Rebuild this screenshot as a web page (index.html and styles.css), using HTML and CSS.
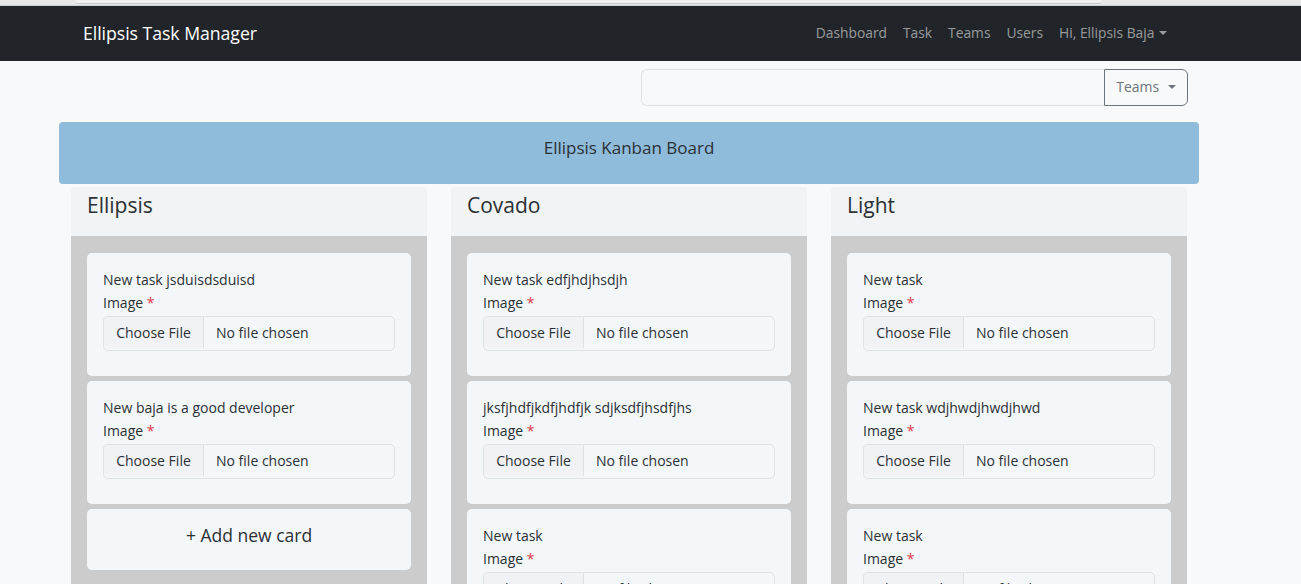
FILE: index.html
```html
<!DOCTYPE html>
<html>
<head>
<meta charset="utf-8">
<link rel="stylesheet" href="styles.css">
</head>
<body>
<div class="topstrip"><div class="topbar"></div></div>
<nav class="navbar">
  <a class="brand">Ellipsis Task Manager</a>
  <ul class="navlinks">
    <li>Dashboard</li>
    <li>Task</li>
    <li>Teams</li>
    <li>Users</li>
    <li class="dropdown">Hi, Ellipsis Baja <span class="caret"></span></li>
  </ul>
</nav>
<main class="page">
  <div class="searchrow">
    <div class="inputgroup">
      <input class="searchinput" type="text">
      <button class="teamsbtn">Teams <span class="caret dark"></span></button>
    </div>
  </div>
  <div class="banner">Ellipsis Kanban Board</div>
  <div class="board">
    <section class="column">
      <header class="colhead">Ellipsis</header>
      <div class="colbody">
        <div class="card">
          <div class="title">New task jsduisdsduisd</div>
          <div class="label">Image <span class="req">*</span></div>
          <div class="file"><span class="filebtn">Choose File</span><span class="filename">No file chosen</span></div>
        </div>
        <div class="card">
          <div class="title">New baja is a good developer</div>
          <div class="label">Image <span class="req">*</span></div>
          <div class="file"><span class="filebtn">Choose File</span><span class="filename">No file chosen</span></div>
        </div>
        <div class="card addcard">+ Add new card</div>
      </div>
    </section>
    <section class="column">
      <header class="colhead">Covado</header>
      <div class="colbody">
        <div class="card">
          <div class="title">New task edfjhdjhsdjh</div>
          <div class="label">Image <span class="req">*</span></div>
          <div class="file"><span class="filebtn">Choose File</span><span class="filename">No file chosen</span></div>
        </div>
        <div class="card">
          <div class="title">jksfjhdfjkdfjhdfjk sdjksdfjhsdfjhs</div>
          <div class="label">Image <span class="req">*</span></div>
          <div class="file"><span class="filebtn">Choose File</span><span class="filename">No file chosen</span></div>
        </div>
        <div class="card">
          <div class="title">New task</div>
          <div class="label">Image <span class="req">*</span></div>
          <div class="file"><span class="filebtn">Choose File</span><span class="filename">No file chosen</span></div>
        </div>
      </div>
    </section>
    <section class="column">
      <header class="colhead">Light</header>
      <div class="colbody">
        <div class="card">
          <div class="title">New task</div>
          <div class="label">Image <span class="req">*</span></div>
          <div class="file"><span class="filebtn">Choose File</span><span class="filename">No file chosen</span></div>
        </div>
        <div class="card">
          <div class="title">New task wdjhwdjhwdjhwd</div>
          <div class="label">Image <span class="req">*</span></div>
          <div class="file"><span class="filebtn">Choose File</span><span class="filename">No file chosen</span></div>
        </div>
        <div class="card">
          <div class="title">New task</div>
          <div class="label">Image <span class="req">*</span></div>
          <div class="file"><span class="filebtn">Choose File</span><span class="filename">No file chosen</span></div>
        </div>
      </div>
    </section>
  </div>
</main>
</body>
</html>
```
FILE: styles.css
```css
* { box-sizing: border-box; }
html, body { margin: 0; padding: 0; }
body {
  background: #f8f9fa;
  font-family: "Open Sans", "Noto Sans", sans-serif;
  color: #2b3035;
  font-size: 14px;
  overflow: hidden;
  height: 584px;
}
.topstrip {
  height: 6px;
  background: #e6e6e6;
  border-bottom: 1px solid #d0d0d0;
  padding-left: 75px;
  padding-right: 199px;
}
.topbar {
  height: 4px;
  background: #f0f0f0;
  border-bottom: 1px solid #c8c8c8;
  border-radius: 0 0 3px 3px;
}
.navbar {
  height: 55px;
  background: #212529;
  display: flex;
  align-items: center;
  justify-content: space-between;
  padding-left: 83px;
  padding-right: 134px;
  padding-bottom: 2px;
}
.brand {
  color: #fff;
  font-size: 17.7px;
  letter-spacing: -0.05px;
}
.navlinks {
  list-style: none;
  margin: 0;
  padding: 0;
  display: flex;
  gap: 16px;
  color: rgba(255,255,255,0.55);
  font-size: 13.8px;
}
.caret {
  display: inline-block;
  width: 0; height: 0;
  border-left: 4px solid transparent;
  border-right: 4px solid transparent;
  border-top: 4.5px solid rgba(255,255,255,0.55);
  vertical-align: 3px;
  margin-left: 1px;
}
.caret.dark { border-top-color: #6c757d; margin-left: 5px; }
.page {
  padding: 8px 102px 0 59px;
}
.searchrow {
  display: flex;
  justify-content: flex-end;
  padding-right: 11px;
}
.inputgroup {
  display: flex;
  width: 547px;
  height: 37px;
}
.searchinput {
  flex: 1;
  border: 1px solid #dee2e6;
  border-right: none;
  border-radius: 6px 0 0 6px;
  background: #f8f9fa;
  margin: 0;
}
.teamsbtn {
  width: 84px;
  border: 1px solid #6c757d;
  border-radius: 0 6px 6px 0;
  background: transparent;
  color: #6c757d;
  font-family: inherit;
  font-size: 14px;
  padding: 0 0 2px;
}
.banner {
  margin-top: 16px;
  height: 62px;
  background: #8fbcdb;
  border-radius: 4px;
  display: flex;
  align-items: center;
  justify-content: center;
  font-size: 17px;
  padding-bottom: 12px;
}
.board {
  display: grid;
  grid-template-columns: repeat(3, 1fr);
  margin-top: 3px;
}
.column {
  padding: 0 12px;
}
.colhead {
  height: 49px;
  background: #f1f3f5;
  border-radius: 4px 4px 0 0;
  font-size: 21px;
  padding: 3px 16px 0;
  line-height: 30px;
}
.colbody {
  background: #cccccc;
  padding: 17px 16px 20px;
  display: flex;
  flex-direction: column;
  gap: 5px;
  height: 400px;
}
.card {
  background: #f4f7fa;
  border-radius: 5px;
  padding: 16px 16px 25px;
}
.title { line-height: 21px; margin-bottom: 2px; }
.label { line-height: 21px; margin-bottom: 3px; }
.req { color: #dc3545; }
.file {
  display: flex;
  height: 35px;
  border: 1px solid #dee2e6;
  border-radius: 5px;
  background: #f4f7fa;
  align-items: stretch;
  padding-bottom: 2px;
}
.filebtn {
  width: 100px;
  background: #f0f2f5;
  border-right: 1px solid #dee2e6;
  border-radius: 5px 0 0 5px;
  display: flex;
  align-items: center;
  justify-content: center;
}
.filename {
  display: flex;
  align-items: center;
  padding-left: 12px;
}
.addcard {
  height: 61px;
  padding: 0;
  display: flex;
  align-items: center;
  justify-content: center;
  font-size: 17.5px;
  padding-bottom: 10px;
}
```
